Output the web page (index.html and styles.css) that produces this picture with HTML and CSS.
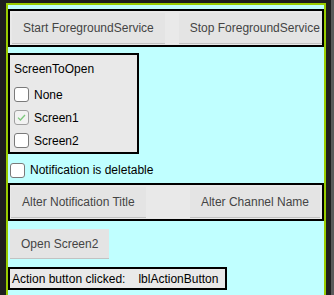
FILE: index.html
```html
<!DOCTYPE html>
<html lang="en">
<head>
    <meta charset="UTF-8">
    <meta name="viewport" content="width=device-width, initial-scale=1.0">
    <title>Foreground Service</title>
    <link rel="stylesheet" href="styles.css">
</head>

<body>
    <div class="page">
        <div class="screen">
            <div class="box service-row">
                <button class="btn">Start ForegroundService</button>
                <button class="btn">Stop ForegroundService</button>
            </div>

            <div class="box choices">
                <div class="choices-title">ScreenToOpen</div>
                <label class="check"><span class="check-box"></span>None</label>
                <label class="check"><span class="check-box check-box--on"><svg width="9" height="7" viewBox="0 0 9 7"><path d="M1 3.6 L3.4 6 L8 1" fill="none" stroke="#7dc97d" stroke-width="1.3"/></svg></span>Screen1</label>
                <label class="check"><span class="check-box"></span>Screen2</label>
            </div>

            <label class="check check--deletable"><span class="check-box"></span>Notification is deletable</label>

            <div class="box alter-row">
                <button class="btn">Alter Notification Title</button>
                <button class="btn">Alter Channel Name</button>
            </div>

            <button class="btn btn--open">Open Screen2</button>

            <div class="box status">
                <span>Action button clicked:</span>
                <span>lblActionButton</span>
            </div>
        </div>
        <div class="edge"></div>
    </div>
</body>
</html>
```

FILE: styles.css
```css
body {
    margin: 0;
    background-color: #1f1f1f;
    font-family: "Liberation Sans", Arial, sans-serif;
    font-size: 12px;
}
.page {
    display: flex;
    height: 295px;
    overflow: hidden;
}
.screen {
    margin: 3px 0 0 6px;
    width: 316px;
    border: 2px solid #99cc00;
    border-bottom: none;
    background-color: #c0ffff;
    display: flex;
    flex-direction: column;
    align-items: flex-start;
}
.edge {
    margin-left: auto;
    width: 3px;
    background-color: #5a5a5a;
}
.box {
    box-sizing: border-box;
    border: 2px solid #000;
    background-color: #e9e9e9;
}
.btn {
    flex: none;
    height: 31px;
    padding: 0 11px;
    border: none;
    border-bottom: 1px solid #c2c2c2;
    background-color: #e4e4e4;
    color: #444;
    font-family: "Liberation Sans", Arial, sans-serif;
    font-size: 12px;
}
.service-row {
    align-self: stretch;
    margin-top: 4px;
    height: 38px;
    display: flex;
    align-items: center;
    gap: 14px;
    padding: 0 2px;
    overflow: hidden;
}
.choices {
    margin-top: 6px;
    width: 131px;
    height: 101px;
    padding: 0 2px;
}
.choices-title {
    height: 28px;
    line-height: 28px;
    padding-left: 2px;
    color: #000;
}
.check {
    display: flex;
    align-items: center;
    gap: 5px;
    height: 23px;
    padding-left: 2px;
    color: #000;
}
.check--deletable {
    box-sizing: border-box;
    height: 29px;
    padding: 3px 0 0 2px;
}
.check-box {
    box-sizing: border-box;
    width: 15px;
    height: 15px;
    border: 1px solid #7a7a7a;
    border-radius: 3px;
    background-color: #fff;
    display: flex;
    align-items: center;
    justify-content: center;
}
.check-box--on {
    border-color: #a0a0a0;
    background-color: #f2f2f2;
}
.alter-row {
    align-self: stretch;
    height: 38px;
    display: flex;
    align-items: center;
    justify-content: space-between;
    padding: 0 2px 0 1px;
}
.btn--open {
    margin: 8px 0 0 2px;
    height: 30px;
}
.status {
    margin-top: 8px;
    width: 219px;
    height: 23px;
    display: flex;
    align-items: center;
    gap: 13px;
    padding-left: 2px;
    color: #000;
}
```
